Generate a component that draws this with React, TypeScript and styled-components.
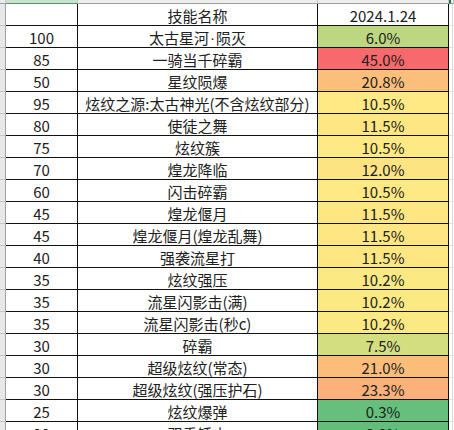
import styled, { createGlobalStyle } from "styled-components";

type SkillRow = {
    level: string,
    name: string,
    share: string,
    fill: string
};

const rows: SkillRow[] = [
    { level: "100", name: "太古星河·陨灭", share: "6.0%", fill: "#bdd780" },
    { level: "85", name: "一骑当千碎霸", share: "45.0%", fill: "#f8696b" },
    { level: "50", name: "星纹陨爆", share: "20.8%", fill: "#fcbf7b" },
    { level: "95", name: "炫纹之源:太古神光(不含炫纹部分)", share: "10.5%", fill: "#ffe984" },
    { level: "80", name: "使徒之舞", share: "11.5%", fill: "#fee683" },
    { level: "75", name: "炫纹簇", share: "10.5%", fill: "#ffe984" },
    { level: "70", name: "煌龙降临", share: "12.0%", fill: "#fee383" },
    { level: "60", name: "闪击碎霸", share: "10.5%", fill: "#ffe984" },
    { level: "45", name: "煌龙偃月", share: "11.5%", fill: "#fee683" },
    { level: "45", name: "煌龙偃月(煌龙乱舞)", share: "11.5%", fill: "#fee683" },
    { level: "40", name: "强袭流星打", share: "11.5%", fill: "#fee683" },
    { level: "35", name: "炫纹强压", share: "10.2%", fill: "#fbea84" },
    { level: "35", name: "流星闪影击(满)", share: "10.2%", fill: "#fbea84" },
    { level: "35", name: "流星闪影击(秒c)", share: "10.2%", fill: "#fbea84" },
    { level: "30", name: "碎霸", share: "7.5%", fill: "#d3de81" },
    { level: "30", name: "超级炫纹(常态)", share: "21.0%", fill: "#fcbd7b" },
    { level: "30", name: "超级炫纹(强压护石)", share: "23.3%", fill: "#fbb179" },
    { level: "25", name: "炫纹爆弹", share: "0.3%", fill: "#66bf7c" },
    { level: "20", name: "双重锤击", share: "0.0%", fill: "#63be7b" },
];

const GlobalStyle = createGlobalStyle`
    html, body {
        margin: 0;
        padding: 0;
        background: #ffffff;
        overflow: hidden;
    }
    body {
        font-family: "Noto Sans CJK SC", "Liberation Sans", sans-serif;
        color: #1c1c1c;
    }
`;

const Sheet = styled.div`
    width: 454px;
    height: 430px;
    overflow: hidden;
    display: flex;
    flex-direction: column;
`;

const columns = "6px 72px 240px 131px 1fr";

const HeaderStrip = styled.div`
    display: grid;
    grid-template-columns: ${columns};
    height: 4px;
    flex-shrink: 0;
`;

const ColumnHeader = styled.div<{ $selected?: boolean, $edge?: boolean }>`
    box-sizing: border-box;
    height: 4px;
    background: ${p => p.$selected ? "#c6e4cd" : "#ececec"};
    border-right: 1px solid #c9c9c9;
    border-bottom: 1px solid ${p => p.$selected ? "#5f8f6c" : "#9e9e9e"};
    border-left: ${p => p.$edge ? "2px solid #217346" : "none"};
`;

const Row = styled.div`
    display: grid;
    grid-template-columns: ${columns};
    height: 22px;
    flex-shrink: 0;
`;

const RowHeader = styled.div`
    box-sizing: border-box;
    background: #e8e8e8;
    border-right: 1px solid #a3a3a3;
    border-bottom: 1px solid #c6c6c6;
`;

const Cell = styled.div<{ $fill?: string }>`
    box-sizing: border-box;
    display: flex;
    align-items: center;
    justify-content: center;
    background: ${p => p.$fill || "#ffffff"};
    border-right: 1px solid #111;
    border-bottom: 1px solid #111;
    font-size: 15px;
    line-height: 21px;
    white-space: nowrap;
    overflow: hidden;
    padding-top: 1px;
    color: #202020;
`;

const Dot = styled.span`
    font-family: "Liberation Sans", sans-serif;
    padding: 0 1px;
`;

const Tail = styled.div`
    box-sizing: border-box;
    background: #ffffff;
    border-bottom: 1px solid #e2e2e2;
    display: flex;
    justify-content: flex-end;

    &::after {
        content: "";
        width: 1px;
        margin-right: 1px;
        background: #dadada;
    }
`;

const SkillName: React.FC<{ name: string }> = ({ name }) => {
    const parts = name.split("·");
    if (parts.length < 2) return <>{name}</>;
    return <>{parts[0]}<Dot>·</Dot>{parts.slice(1).join("·")}</>;
};

const SkillTable: React.FC = () => (
    <Sheet>
        <HeaderStrip>
            <ColumnHeader />
            <ColumnHeader $selected />
            <ColumnHeader />
            <ColumnHeader />
            <ColumnHeader $edge />
        </HeaderStrip>
        <Row>
            <RowHeader />
            <Cell />
            <Cell>技能名称</Cell>
            <Cell>2024.1.24</Cell>
            <Tail />
        </Row>
        {
            rows.map((row, i) => (
                <Row key={i}>
                    <RowHeader />
                    <Cell>{row.level}</Cell>
                    <Cell><SkillName name={row.name} /></Cell>
                    <Cell $fill={row.fill}>{row.share}</Cell>
                    <Tail />
                </Row>
            ))
        }
    </Sheet>
);

export default function App() {
    return (
        <>
            <GlobalStyle />
            <SkillTable />
        </>
    );
}
